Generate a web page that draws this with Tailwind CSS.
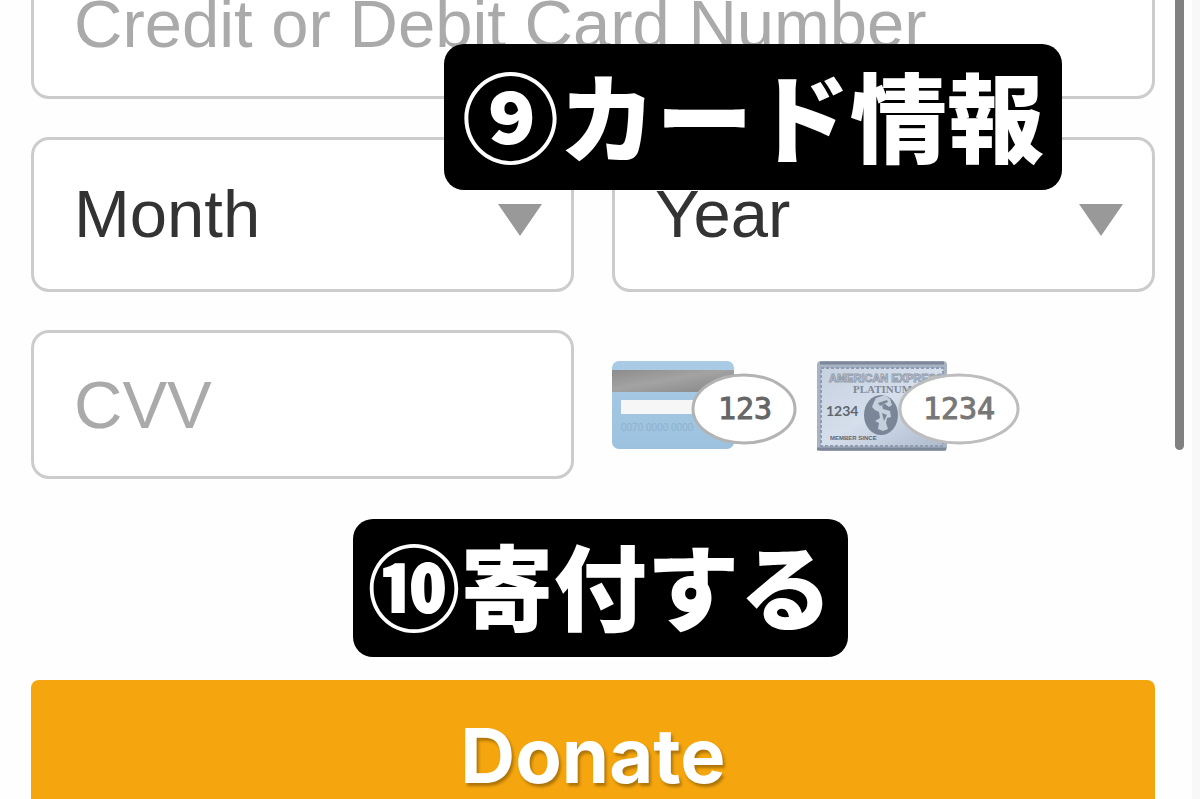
<!DOCTYPE html>
<html lang="ja">

<head>
    <meta charset="UTF-8">
    <meta name="viewport" content="width=device-width, initial-scale=1.0">
    <title>Donate</title>
    <script src="https://cdn.jsdelivr.net/npm/@tailwindcss/browser@4"></script>
</head>

<body class="h-screen overflow-hidden bg-[#f8f8f8]" style="font-family: 'Liberation Sans', Arial, sans-serif;">
    <div class="relative mr-2 flow-root min-h-screen bg-[#fefefe] pl-[31px] pr-[37px]">
        <form class="-mt-[53px] text-[67px] text-[#333]">
            <!-- Card number -->
            <div class="relative">
                <label for="card" class="sr-only">Credit or Debit Card Number</label>
                <input type="text" id="card" placeholder="Credit or Debit Card Number"
                    class="block h-[152px] w-full rounded-[18px] border-3 border-[#ccc] bg-white px-10 placeholder:text-[#aaa]">
                <div class="absolute right-[93px] top-[97px] z-10 rounded-[20px] bg-black px-[18px] pb-2 text-[97px] leading-[138px] font-black whitespace-nowrap text-white"
                    style="font-family: 'Noto Sans CJK JP', sans-serif;">⑨カード情報</div>
            </div>

            <!-- Expiry -->
            <div class="mt-[38px] grid grid-cols-2 gap-[38px]">
                <div class="relative">
                    <label for="month" class="sr-only">Month</label>
                    <select id="month" class="block h-[155px] w-full appearance-none rounded-[18px] border-3 border-[#ccc] bg-white px-10">
                        <option>Month</option>
                    </select>
                    <svg class="pointer-events-none absolute right-8 top-[67px] h-8 w-11" viewBox="0 0 44 32" fill="#999">
                        <path d="M0 0h44L22 32z" />
                    </svg>
                </div>
                <div class="relative">
                    <label for="year" class="sr-only">Year</label>
                    <select id="year" class="block h-[155px] w-full appearance-none rounded-[18px] border-3 border-[#ccc] bg-white px-10">
                        <option>Year</option>
                    </select>
                    <svg class="pointer-events-none absolute right-8 top-[67px] h-8 w-11" viewBox="0 0 44 32" fill="#999">
                        <path d="M0 0h44L22 32z" />
                    </svg>
                </div>
            </div>

            <!-- CVV -->
            <div class="mt-[38px] grid grid-cols-2 items-center gap-[38px]">
                <div>
                    <label for="cvv" class="sr-only">CVV</label>
                    <input type="text" id="cvv" placeholder="CVV"
                        class="block h-[149px] w-full rounded-[18px] border-3 border-[#ccc] bg-white px-10 placeholder:text-[#aaa]">
                </div>
                <div class="flex gap-[18px]">
                    <svg class="h-[94px] w-[186px]" viewBox="0 0 186 94">
                        <defs>
                            <linearGradient id="blue" x1="0" y1="0" x2="0" y2="1">
                                <stop offset="0" stop-color="#a9cbe5" />
                                <stop offset="1" stop-color="#9cc2df" />
                            </linearGradient>
                            <linearGradient id="stripe" x1="0" y1="0" x2="1" y2="1">
                                <stop offset="0" stop-color="#8c8c8c" />
                                <stop offset=".45" stop-color="#a3a3a3" />
                                <stop offset="1" stop-color="#858585" />
                            </linearGradient>
                        </defs>
                        <rect y="3" width="122" height="88" rx="7" fill="url(#blue)" />
                        <rect y="12" width="122" height="22" fill="url(#stripe)" />
                        <rect x="9" y="42" width="90" height="14" fill="#f6f6f6" />
                        <text x="9" y="73" font-family="Liberation Sans" font-size="10" fill="#8db2ce">0070 0000 0000</text>
                        <ellipse cx="132" cy="51" rx="51" ry="34" fill="#fff" stroke="#b3b3b3" stroke-width="3" />
                        <text x="133" y="61" text-anchor="middle" font-family="DejaVu Sans Mono" font-size="30" fill="#666" stroke="#666" stroke-width="1">123</text>
                    </svg>
                    <svg class="h-[94px] w-[204px]" viewBox="0 0 204 94">
                        <defs>
                            <linearGradient id="silver" x1="0" y1="0" x2="1" y2="1">
                                <stop offset="0" stop-color="#c6d1e0" />
                                <stop offset=".5" stop-color="#d5deeb" />
                                <stop offset="1" stop-color="#adbbcf" />
                            </linearGradient>
                        </defs>
                        <rect x="1" y="3" width="130" height="90" rx="4" fill="#a8b4c5" />
                        <path d="M4 5h124M1 91h129" stroke="#7d8797" stroke-width="3" />
                        <rect x="5" y="10" width="122" height="78" fill="url(#silver)" stroke="#8e9bb0" stroke-width="2" stroke-dasharray="3 2" />
                        <text x="13" y="24" font-family="Liberation Sans" font-size="11" font-weight="bold" fill="#e4e9f0" stroke="#939dac" stroke-width="1">AMERICAN EXPRESS</text>
                        <text x="37" y="35" font-family="Liberation Serif" font-size="11" font-weight="bold" fill="#7f8998">PLATINUM</text>
                        <ellipse cx="65" cy="57" rx="17" ry="20" fill="#7b8798" />
                        <path d="M60 40l9-3 5 4 2 6-3 2-4-3-3 1 1 4 7 2 1 6-4 1-1 5 2 6-5 2-5-2 1-6-4-2 5-3-1-6-4-2-3-3 2-5z" fill="#c5d0dd" />
                        <path d="M62 45l9-3 1 2-8 4zM66 55l5 2-3 6z" fill="#7b8798" />
                        <text x="10" y="58" font-family="Lato" font-size="14" font-weight="bold" fill="#5f6670">1234</text>
                        <text x="14" y="82" font-family="Liberation Sans" font-size="6" font-weight="bold" fill="#5d6673">MEMBER SINCE</text>
                        <ellipse cx="143" cy="51" rx="59" ry="34" fill="#fff" stroke="#bdbdbd" stroke-width="3" />
                        <text x="143" y="61" text-anchor="middle" font-family="DejaVu Sans Mono" font-size="30" fill="#777" stroke="#777" stroke-width="1">1234</text>
                    </svg>
                </div>
            </div>

            <div class="mx-auto mt-10 w-fit translate-x-[7px] rounded-[20px] bg-black px-[15px] pb-2 text-[93px] leading-[130px] font-black whitespace-nowrap text-white"
                style="font-family: 'Noto Sans CJK JP', sans-serif;">⑩寄付する</div>

            <button type="submit" class="mt-[23px] block h-[150px] w-full rounded-lg bg-[#f5a50d] text-[76px] font-bold text-white text-shadow-[2px_3px_3px_rgb(0_0_0/0.3)]"
                style="font-family: Inter, sans-serif;">Donate</button>
        </form>

        <!-- Scroll indicator -->
        <div class="absolute right-2 top-0 h-[450px] w-[9px] rounded-b-full bg-[#808080]"></div>
    </div>
</body>

</html>
